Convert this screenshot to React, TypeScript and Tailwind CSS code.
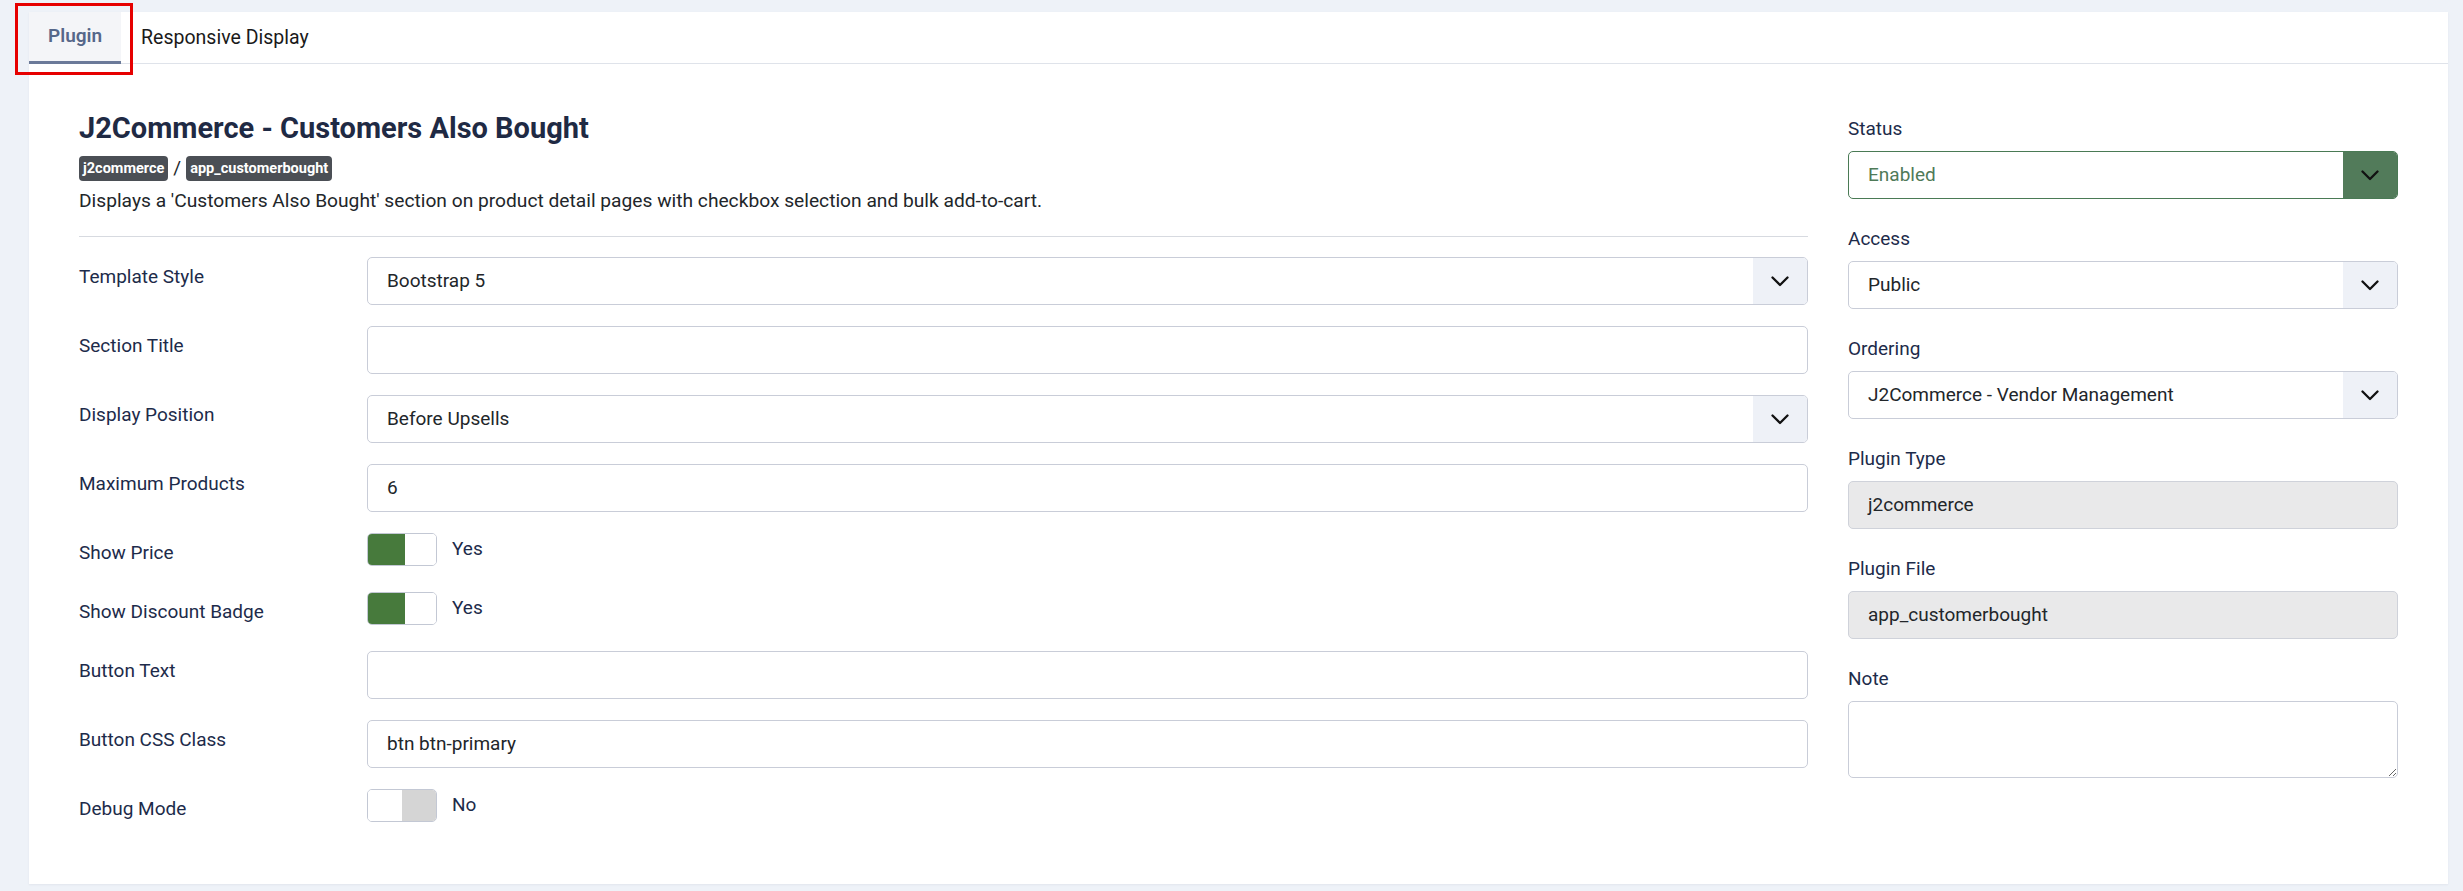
import React from 'react';

const Chevron: React.FC = () => (
  <svg width="18" height="11" viewBox="0 0 18 11" fill="none">
    <path d="M1.5 1.5 L9 9 L16.5 1.5" stroke="#111" strokeWidth="2.3" strokeLinecap="round" strokeLinejoin="round" />
  </svg>
);

const TextBox: React.FC<{ value?: string }> = ({ value }) => (
  <div className="h-[48px] border border-[#c9cdd8] rounded-[5px] bg-white flex items-center pl-[19px] text-[19px] text-[#22262a]">
    {value}
  </div>
);

const SelectBox: React.FC<{ value: string }> = ({ value }) => (
  <div className="h-[48px] border border-[#c9cdd8] rounded-[5px] bg-white flex items-stretch overflow-hidden">
    <div className="flex-1 flex items-center pl-[19px] text-[19px] text-[#22262a]">{value}</div>
    <div className="w-[54px] bg-[#eef1f7] flex items-center justify-center">
      <Chevron />
    </div>
  </div>
);

const Toggle: React.FC<{ on: boolean }> = ({ on }) => (
  <div className="flex items-center h-[33px]">
    <div className="w-[70px] h-[33px] border border-[#c3c8d4] rounded-[5px] overflow-hidden flex">
      {on ? (
        <>
          <div className="w-[37px] bg-[#477a3c]" />
          <div className="flex-1 bg-white" />
        </>
      ) : (
        <>
          <div className="w-[34px] bg-white" />
          <div className="flex-1 bg-[#d5d5d5]" />
        </>
      )}
    </div>
    <span className="ml-[15px] text-[19px] text-[#1d2b4a]">{on ? 'Yes' : 'No'}</span>
  </div>
);

const Row: React.FC<{ label: string; toggle?: boolean; children: React.ReactNode }> = ({ label, toggle, children }) => (
  <div className={`flex mb-[21px] ${toggle ? 'h-[38px]' : ''}`}>
    <div className="w-[288px] pt-[6px] leading-[27px] text-[19px] text-[#1d2b4a]">{label}</div>
    <div className="flex-1">{children}</div>
  </div>
);

const SideField: React.FC<{ label: string; children: React.ReactNode }> = ({ label, children }) => (
  <div className="mb-[26px]">
    <div className="leading-[27px] text-[19px] text-[#1d2b4a] mb-[9px]">{label}</div>
    {children}
  </div>
);

export default function App() {
  return (
    <div className="relative min-h-[891px] bg-[#eef2f8] pt-[12px] pl-[29px] pr-[15px] pb-[6px] font-['Roboto','Liberation_Sans',sans-serif]">
      <div className="bg-white shadow-[0_1px_2px_rgba(30,40,70,0.06)]">
        {/* tabs */}
        <div className="flex h-[52px] border-b border-[#dfe3ea]">
          <div className="h-[52px] -mb-px px-[19px] flex items-center bg-[#f4f5f8] border-b-[3px] border-[#6b7a99] text-[19px] font-semibold text-[#56678a]">
            Plugin
          </div>
          <div className="px-[20px] flex items-center text-[19.5px] text-[#1a1a1a]">Responsive Display</div>
        </div>

        <div className="flex gap-[40px] px-[50px] pt-[47px] pb-[36px]">
          {/* main column */}
          <div className="flex-1">
            <h2 className="text-[29px] leading-[34px] font-bold text-[#1f2a44]">J2Commerce - Customers Also Bought</h2>
            <div className="mt-[11px] flex items-center gap-[5px] h-[25px]">
              <span className="h-[25px] px-[4px] rounded-[4px] bg-[#4b4f55] text-white text-[14.5px] font-bold flex items-center">j2commerce</span>
              <span className="text-[19px] text-[#22262a]">/</span>
              <span className="h-[25px] px-[4px] rounded-[4px] bg-[#4b4f55] text-white text-[14.5px] font-bold flex items-center">app_customerbought</span>
            </div>
            <p className="mt-[6px] text-[19.2px] leading-[27px] text-[#22262a]">
              Displays a 'Customers Also Bought' section on product detail pages with checkbox selection and bulk add-to-cart.
            </p>
            <div className="mt-[22px] border-t border-[#d7dae0]" />

            <div className="mt-[20px]">
              <Row label="Template Style">
                <SelectBox value="Bootstrap 5" />
              </Row>
              <Row label="Section Title">
                <TextBox />
              </Row>
              <Row label="Display Position">
                <SelectBox value="Before Upsells" />
              </Row>
              <Row label="Maximum Products">
                <TextBox value="6" />
              </Row>
              <Row label="Show Price" toggle>
                <Toggle on />
              </Row>
              <Row label="Show Discount Badge" toggle>
                <Toggle on />
              </Row>
              <Row label="Button Text">
                <TextBox />
              </Row>
              <Row label="Button CSS Class">
                <TextBox value="btn btn-primary" />
              </Row>
              <Row label="Debug Mode" toggle>
                <Toggle on={false} />
              </Row>
            </div>
          </div>

          {/* side column */}
          <div className="w-[550px] pt-[4px]">
            <SideField label="Status">
              <div className="h-[48px] border border-[#4a7a55] rounded-[5px] bg-white flex items-stretch overflow-hidden">
                <div className="flex-1 flex items-center pl-[19px] text-[19px] text-[#4f7a58]">Enabled</div>
                <div className="w-[54px] bg-[#527b5a] flex items-center justify-center">
                  <Chevron />
                </div>
              </div>
            </SideField>
            <SideField label="Access">
              <SelectBox value="Public" />
            </SideField>
            <SideField label="Ordering">
              <SelectBox value="J2Commerce - Vendor Management" />
            </SideField>
            <SideField label="Plugin Type">
              <div className="h-[48px] border border-[#cfd2da] rounded-[5px] bg-[#e9e9ea] flex items-center pl-[19px] text-[19px] text-[#22262a]">
                j2commerce
              </div>
            </SideField>
            <SideField label="Plugin File">
              <div className="h-[48px] border border-[#cfd2da] rounded-[5px] bg-[#e9e9ea] flex items-center pl-[19px] text-[19px] text-[#22262a]">
                app_customerbought
              </div>
            </SideField>
            <SideField label="Note">
              <textarea
                readOnly
                className="block w-full h-[77px] border border-[#c9cdd8] rounded-[5px] bg-white px-[19px] py-[10px] text-[19px] outline-none"
              />
            </SideField>
          </div>
        </div>
      </div>

      {/* highlight around the active tab */}
      <div className="absolute left-[15px] top-[3px] w-[118px] h-[72px] border-[3px] border-[#e60000] pointer-events-none" />
    </div>
  );
}
